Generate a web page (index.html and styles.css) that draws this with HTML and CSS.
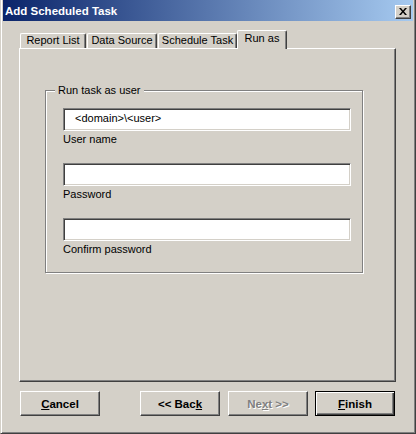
FILE: index.html
```html
<!DOCTYPE html>
<html>
<head>
<meta charset="utf-8">
<title>Add Scheduled Task</title>
<link rel="stylesheet" href="styles.css">
</head>
<body>
<div class="window">
  <div class="titlebar">
    <span class="title">Add Scheduled Task</span>
    <div class="close"><svg width="8" height="7" viewBox="0 0 8 7"><path d="M0 0h2l2 2.4 2-2.4h2l-3 3.5 3 3.5h-2l-2-2.4-2 2.4h-2l3-3.5z" fill="#000"/></svg></div>
  </div>
  <div class="body">
    <div class="tabs">
      <div class="tab tab-report">Report List</div>
      <div class="tab tab-source">Data Source</div>
      <div class="tab tab-schedule">Schedule Task</div>
      <div class="tab tab-run active">Run as</div>
    </div>
    <div class="panel">
      <fieldset class="group">
        <legend>Run task as user</legend>
        <div class="field">
          <div class="input">&lt;domain&gt;\&lt;user&gt;</div>
          <div class="label">User name</div>
        </div>
        <div class="field">
          <div class="input"></div>
          <div class="label">Password</div>
        </div>
        <div class="field">
          <div class="input"></div>
          <div class="label">Confirm password</div>
        </div>
      </fieldset>
    </div>
    <div class="buttons">
      <div class="btn btn-cancel"><u>C</u>ancel</div>
      <div class="btn btn-back">&lt;&lt; Bac<u>k</u></div>
      <div class="btn btn-next disabled">Ne<u>x</u>t &gt;&gt;</div>
      <div class="btn btn-finish default"><u>F</u>inish</div>
    </div>
  </div>
</div>
</body>
</html>
```

FILE: styles.css
```css
* { box-sizing: border-box; }
html, body { margin: 0; padding: 0; background: #d4d0c8; }
body { font-family: "Liberation Sans", Arial, sans-serif; font-size: 11px; color: #000; }

.window {
  width: 416px;
  height: 434px;
  background: #d4d0c8;
  border-left: 1px solid #d4d0c8;
  border-right: 1px solid #404040;
  border-bottom: 1px solid #404040;
  box-shadow: inset 1px 0 #fff, inset -1px -1px #808080;
  padding: 0 2px 2px 2px;
  display: flex;
  flex-direction: column;
}

.titlebar {
  height: 21px;
  flex: none;
  background: linear-gradient(to right, #0a246a, #a6caf0);
  display: flex;
  align-items: center;
  padding: 2px 2px 0 2px;
}
.title {
  color: #fff;
  font-weight: bold;
  font-size: 11.5px;
  line-height: 13px;
}
.close {
  margin-left: auto;
  width: 16px;
  height: 14px;
  background: #d4d0c8;
  border: 1px solid;
  border-color: #fff #404040 #404040 #fff;
  box-shadow: inset -1px -1px #808080;
  display: flex;
  align-items: center;
  justify-content: center;
}
.close svg { display: block; }

.body {
  flex: 1;
  padding: 9px 17px 0 16px;
  display: flex;
  flex-direction: column;
}

.tabs {
  height: 19px;
  display: flex;
  align-items: flex-start;
  position: relative;
  z-index: 1;
  padding-left: 1px;
}
.tab {
  margin-top: 3px;
  height: 15px;
  line-height: 13px;
  text-align: center;
  background: #d4d0c8;
  border-top: 1px solid #fff;
  border-left: 1px solid #fff;
  border-right: 1px solid #404040;
  box-shadow: inset -1px 0 #808080;
  border-radius: 2px 2px 0 0;
  margin-right: 1px;
}
.tab-report { width: 66px; }
.tab-source { width: 70px; }
.tab-schedule { width: 79px; margin-right: 0; }
.tab-run { width: 50px; }
.tab.active {
  margin-top: 0;
  height: 19px;
  padding-top: 1px;
}

.panel {
  height: 334px;
  flex: none;
  margin-top: -1px;
  border-top: 1px solid #fff;
  border-left: 1px solid #fff;
  border-right: 1px solid #404040;
  border-bottom: 1px solid #404040;
  box-shadow: inset -1px -1px #808080;
  padding-top: 35px;
}

.group {
  margin: 0 32px 0 25px;
  border: 1px solid #808080;
  box-shadow: 1px 1px 0 #fff, inset 1px 1px 0 #fff;
  padding: 11px 11px 16px 17px;
}
.group legend {
  margin-left: -8px;
  padding: 0 3px;
  line-height: 13px;
  background: #d4d0c8;
}

.field { margin-bottom: 17px; }
.field:last-child { margin-bottom: 0; }
.input {
  height: 23px;
  background: #fff;
  border: 1px solid;
  border-color: #808080 #fff #fff #808080;
  box-shadow: inset 1px 1px #404040, inset -1px -1px #d4d0c8;
  padding: 2px 0 0 11px;
  line-height: 15px;
  white-space: pre;
}
.label {
  margin-top: 2px;
  line-height: 13px;
}

.buttons {
  margin-top: 9px;
  display: flex;
  padding-left: 1px;
}
.btn {
  width: 80px;
  height: 25px;
  display: flex;
  align-items: center;
  justify-content: center;
  font-weight: bold;
  font-size: 11.5px;
  background: #d4d0c8;
  border: 1px solid;
  border-color: #fff #404040 #404040 #fff;
  box-shadow: inset -1px -1px #808080;
}
.btn-back { margin-left: 40px; }
.btn-next { margin-left: 8px; }
.btn-finish { margin-left: 7px; }
.btn.disabled {
  color: #808080;
  text-shadow: 1px 1px 0 #fff;
}
.btn.default {
  border-color: #000;
  box-shadow: inset 1px 1px #fff, inset -1px -1px #404040, inset -2px -2px #808080;
}
```
